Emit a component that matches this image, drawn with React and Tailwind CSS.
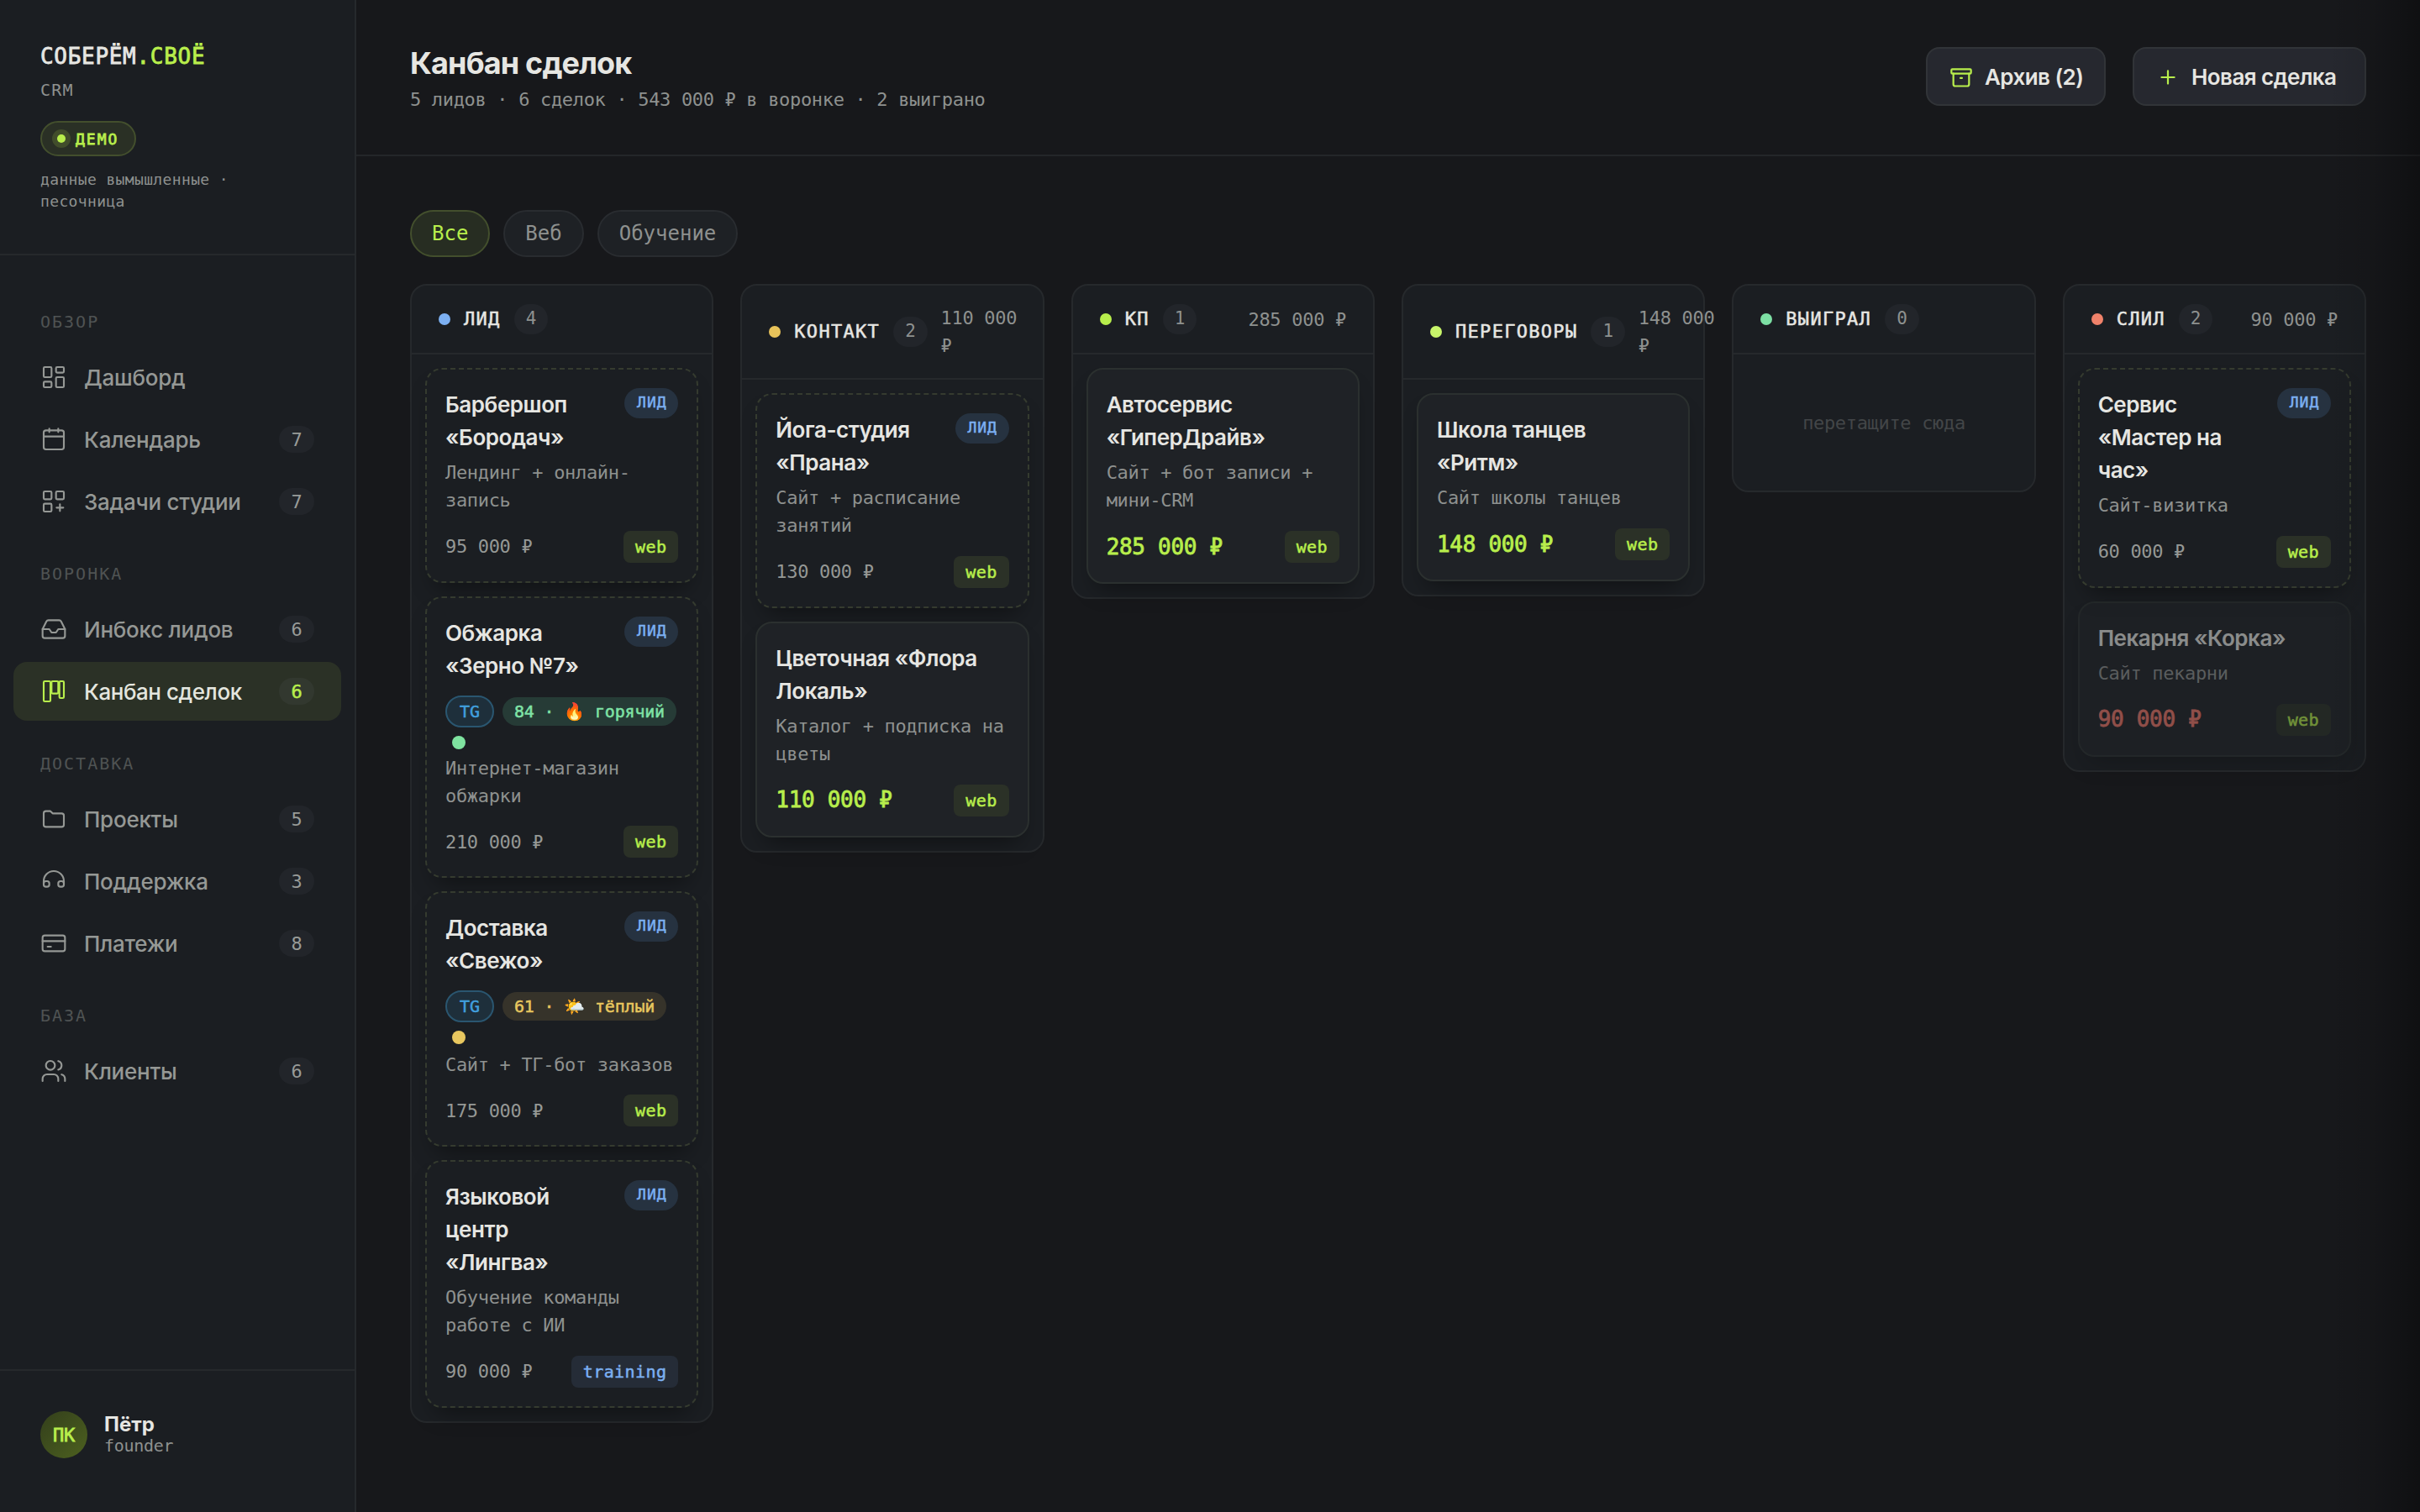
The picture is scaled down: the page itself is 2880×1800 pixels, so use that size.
import React from "react";
import { LayoutDashboard, Inbox, Users } from "lucide-react";

const MONO = "font-['DejaVu_Sans_Mono','Liberation_Mono',monospace]";
const SANS = "font-['Inter','Noto_Sans',sans-serif]";
// The monospaced family has no medium weight; a thin stroke stands in for it.
const MEDIUM = "[-webkit-text-stroke:0.5px_currentColor]";
const SEMIBOLD = "[-webkit-text-stroke:0.8px_currentColor]";

function Svg({ children, className = "size-8", strokeWidth = 1.6 }) {
  return (
    <svg
      viewBox="0 0 24 24"
      fill="none"
      stroke="currentColor"
      strokeWidth={strokeWidth}
      strokeLinecap="round"
      strokeLinejoin="round"
      className={`${className} shrink-0`}
    >
      {children}
    </svg>
  );
}

const icons = {
  dashboard: <LayoutDashboard className="size-8 shrink-0" strokeWidth={1.6} />,
  inbox: <Inbox className="size-8 shrink-0" strokeWidth={1.6} />,
  users: <Users className="size-8 shrink-0" strokeWidth={1.6} />,
  calendar: (
    <Svg>
      <rect x="3" y="4" width="18" height="17" rx="2" />
      <path d="M3 9.5h18M8 2.5v3M16 2.5v3" />
    </Svg>
  ),
  tasks: (
    <Svg>
      <rect x="3" y="3" width="7" height="7" rx="1" />
      <rect x="14" y="3" width="7" height="7" rx="1" />
      <rect x="3" y="14" width="7" height="7" rx="1" />
      <path d="M17.5 14.5v6M14.5 17.5h6" />
    </Svg>
  ),
  kanban: (
    <Svg>
      <rect x="3" y="3" width="6" height="18" rx="1" />
      <rect x="10" y="3" width="6" height="11" rx="1" />
      <rect x="17" y="3" width="4" height="15" rx="1" />
    </Svg>
  ),
  folder: (
    <Svg>
      <path d="M3 7a2 2 0 0 1 2-2h4l2 2h8a2 2 0 0 1 2 2v8a2 2 0 0 1-2 2H5a2 2 0 0 1-2-2z" />
    </Svg>
  ),
  support: (
    <Svg>
      <path d="M3 14v-2a9 9 0 0 1 18 0v2" />
      <path d="M3 14a2 2 0 0 1 2-2h1a2 2 0 0 1 2 2v1a2 2 0 0 1-2 2H5a2 2 0 0 1-2-2zM21 14a2 2 0 0 0-2-2h-1a2 2 0 0 0-2 2v1a2 2 0 0 0 2 2h1a2 2 0 0 0 2-2z" />
    </Svg>
  ),
  card: (
    <Svg>
      <rect x="2" y="5" width="20" height="14" rx="2" />
      <path d="M2 10h20M6.5 15h3" />
    </Svg>
  ),
};

const nav = [
  {
    label: "ОБЗОР",
    items: [
      { icon: "dashboard", text: "Дашборд" },
      { icon: "calendar", text: "Календарь", count: 7 },
      { icon: "tasks", text: "Задачи студии", count: 7 },
    ],
  },
  {
    label: "ВОРОНКА",
    items: [
      { icon: "inbox", text: "Инбокс лидов", count: 6 },
      { icon: "kanban", text: "Канбан сделок", count: 6, active: true },
    ],
  },
  {
    label: "ДОСТАВКА",
    items: [
      { icon: "folder", text: "Проекты", count: 5 },
      { icon: "support", text: "Поддержка", count: 3 },
      { icon: "card", text: "Платежи", count: 8 },
    ],
  },
  { label: "БАЗА", items: [{ icon: "users", text: "Клиенты", count: 6 }] },
];

const columns = [
  {
    title: "ЛИД",
    dot: "bg-[#7cb0f2]",
    count: 4,
    cards: [
      { title: "Барбершоп «Бородач»", desc: "Лендинг + онлайн-запись", price: "95\u00a0000 ₽", tag: "web", lead: true },
      {
        title: "Обжарка «Зерно №7»",
        desc: "Интернет-магазин обжарки",
        price: "210\u00a0000 ₽",
        tag: "web",
        lead: true,
        heat: { score: 84, emoji: "🔥", text: "горячий", pill: "bg-[#263b36] text-[#7fe3a6]", dot: "bg-[#7fe3a0]", box: "h-20" },
      },
      {
        title: "Доставка «Свежо»",
        desc: "Сайт + ТГ-бот заказов",
        price: "175\u00a0000 ₽",
        tag: "web",
        lead: true,
        heat: { score: 61, emoji: "🌤️", text: "тёплый", pill: "bg-[#36332a] text-[#e8c75f]", dot: "bg-[#e8c75f]", box: "h-[81.5px]" },
      },
      { title: "Языковой центр «Лингва»", desc: "Обучение команды работе с ИИ", price: "90\u00a0000 ₽", tag: "training", lead: true },
    ],
  },
  {
    title: "КОНТАКТ",
    dot: "bg-[#e8c35a]",
    count: 2,
    sum: "110\u00a0000 ₽",
    cards: [
      { title: "Йога-студия «Прана»", desc: "Сайт + расписание занятий", price: "130\u00a0000 ₽", tag: "web", lead: true },
      { title: "Цветочная «Флора Локаль»", desc: "Каталог + подписка на цветы", price: "110\u00a0000 ₽", tag: "web" },
    ],
  },
  {
    title: "КП",
    dot: "bg-[#b8ee4c]",
    count: 1,
    sum: "285\u00a0000 ₽",
    cards: [{ title: "Автосервис «ГиперДрайв»", desc: "Сайт + бот записи + мини-CRM", price: "285\u00a0000 ₽", tag: "web" }],
  },
  {
    title: "ПЕРЕГОВОРЫ",
    dot: "bg-[#c8f56a]",
    count: 1,
    sum: "148\u00a0000 ₽",
    cards: [{ title: "Школа танцев «Ритм»", desc: "Сайт школы танцев", price: "148\u00a0000 ₽", tag: "web" }],
  },
  { title: "ВЫИГРАЛ", dot: "bg-[#7de0a4]", count: 0, cards: [] },
  {
    title: "СЛИЛ",
    dot: "bg-[#f0826a]",
    count: 2,
    sum: "90\u00a0000 ₽",
    cards: [
      { title: "Сервис «Мастер на час»", desc: "Сайт-визитка", price: "60\u00a0000 ₽", tag: "web", lead: true },
      { title: "Пекарня «Корка»", desc: "Сайт пекарни", price: "90\u00a0000 ₽", tag: "web", lost: true },
    ],
  },
];

function NavItem({ item }) {
  return (
    <div
      className={`flex h-[70px] items-center gap-5 rounded-2xl px-8 ${
        item.active ? "bg-[#2b3126] text-[#b8ee4c]" : "text-[#959895]"
      }`}
    >
      {icons[item.icon]}
      <span
        className={`flex-1 whitespace-nowrap text-[26px] font-medium ${
          item.active ? "tracking-[-0.45px] text-[#e4e6df]" : "tracking-[-0.25px]"
        }`}
      >
        {item.text}
      </span>
      {item.count !== undefined && (
        <span
          className={`${MONO} flex h-8 w-[42px] items-center justify-center rounded-full text-[22px] ${
            item.active ? `${MEDIUM} bg-[#32382f] text-[#b8ee4c]` : "bg-[#22252a] text-[#989b98]"
          }`}
        >
          {item.count}
        </span>
      )}
    </div>
  );
}

function Sidebar() {
  return (
    <aside className="flex w-[424px] shrink-0 flex-col border-r-2 border-[#26292c] bg-[#1b1e22]">
      <div className={`${MONO} h-[304px] border-b-2 border-[#26292c] px-12 pt-12`}>
        <div className={`${SEMIBOLD} text-[26px] leading-[38px] tracking-[0.7px] text-[#e6e6e2]`}>
          СОБЕРЁМ<span className="text-[#b8ee4c]">.СВОЁ</span>
        </div>
        <div className="mt-1.5 text-[20px] leading-[30px] tracking-[1.2px] text-[#8e918f]">CRM</div>
        <div className="mt-[22px] flex h-[42px] w-[114px] items-center gap-3 rounded-full border-2 border-[#434f2d] bg-[#2a3025] pl-[18px]">
          <span className="size-2.5 rounded-full bg-[#b8ee4c] shadow-[0_0_0_6px_#414d2b]" />
          <span className={`${SEMIBOLD} text-[18px] tracking-[2px] text-[#b8ee4c]`}>ДЕМО</span>
        </div>
        <div className="mt-[15px] text-[18px] leading-[26px] tracking-[0.36px] text-[#8e918f]">
          данные вымышленные ·<br />
          песочница
        </div>
      </div>
      <nav className="flex-1 px-4 pt-7">
        {nav.map((group) => (
          <div key={group.label} className="pt-9">
            <div className={`${MONO} h-[30px] px-8 text-[20px] leading-[30px] tracking-[2px] text-[#4f5353]`}>
              {group.label}
            </div>
            <div className="mt-4 flex flex-col gap-1">
              {group.items.map((item) => (
                <NavItem key={item.text} item={item} />
              ))}
            </div>
          </div>
        ))}
      </nav>
      <div className="flex h-[170px] items-start gap-5 border-t-2 border-[#26292c] px-12 pt-12">
        <div
          className={`${MONO} ${SEMIBOLD} flex size-14 items-center justify-center rounded-full bg-linear-to-br from-[#333f1b] to-[#4d611f] text-[22px] tracking-[-0.3px] text-[#b8ee4c]`}
        >
          ПК
        </div>
        <div className="pt-px">
          <div className="text-[24px] leading-[29px] font-bold text-[#e6e6e2]">Пётр</div>
          <div className={`${MONO} text-[20px] leading-[22px] tracking-[-0.3px] text-[#8e918f]`}>founder</div>
        </div>
      </div>
    </aside>
  );
}

function HeatRow({ heat }) {
  return (
    <div className={`${MONO} ${MEDIUM} ${heat.box} flex flex-wrap content-start items-center gap-x-2.5 pt-4 text-[20px] whitespace-nowrap`}>
      <span className="flex h-[38px] w-[58px] items-center justify-center rounded-full border-2 border-[#2a5670] bg-[#1e2f3b] text-[#419fdd]">
        TG
      </span>
      <span className={`flex h-[34px] items-center rounded-full px-3.5 tracking-[-0.2px] ${heat.pill}`}>
        {heat.score} · {heat.emoji}
        <span className="ml-3 tracking-[-0.2px]">{heat.text}</span>
      </span>
      <span className="flex w-full pt-2.5 pl-2">
        <span className={`size-4 rounded-full ${heat.dot}`} />
      </span>
    </div>
  );
}

function Card({ card }) {
  const price = card.lead
    ? "text-[22px] leading-[33px] tracking-[-0.33px] text-[#959895]"
    : `${SEMIBOLD} text-[26px] leading-[39.6px] tracking-[-0.3px] ${card.lost ? "text-[#f0786a]" : "text-[#b8ee4c]"}`;
  return (
    <div
      className={`rounded-[20px] border-2 p-[22px] shadow-[0_16px_28px_-12px_rgba(0,0,0,0.45)] ${
        card.lead ? "border-dashed border-[#353b2f] bg-[#1b1e22]" : "border-[#2b302f] bg-[#1f2226]"
      } ${card.lost ? "opacity-55" : ""}`}
    >
      <div className="flex items-start justify-between gap-4">
        <div className="text-[26px] leading-[39px] font-semibold tracking-[-0.45px] text-[#e6e6e2]">{card.title}</div>
        {card.lead && (
          <span
            className={`${MONO} ${MEDIUM} flex h-9 w-16 shrink-0 items-center justify-center rounded-full bg-[#263240] pb-[3px] pl-px text-[18px] tracking-[1px] text-[#7cb0f2]`}
          >
            ЛИД
          </span>
        )}
      </div>
      {card.heat && <HeatRow heat={card.heat} />}
      <div className={`${MONO} mt-[6px] text-[22px] leading-[33px] tracking-[-0.33px] text-[#8e918f]`}>{card.desc}</div>
      <div className={`${MONO} mt-[19.5px] flex items-center justify-between whitespace-nowrap`}>
        <span className={price}>{card.price}</span>
        <span
          className={`${MEDIUM} flex h-[38px] items-center rounded-lg px-3.5 text-[20px] tracking-[0.4px] ${
            card.tag === "web" ? "bg-[#2b3127] text-[#b8ee4c]" : "bg-[#252c37] text-[#7cb0f2]"
          }`}
        >
          {card.tag}
        </span>
      </div>
    </div>
  );
}

function Column({ column }) {
  return (
    <section className="min-w-0 rounded-[20px] border-2 border-[#26292c] bg-[#1b1e22]">
      <header className={`${MONO} flex items-center gap-4 border-b-2 border-[#26292c] px-8 py-[22px]`}>
        <span className={`size-3.5 shrink-0 rounded-full ${column.dot}`} />
        <span className={`${MEDIUM} text-[22px] leading-9 tracking-[1.3px] text-[#e6e6e2]`}>{column.title}</span>
        <span className="flex h-9 shrink-0 items-center rounded-full bg-[#22252a] px-3.5 text-[21px] tracking-[-0.3px] text-[#8e918f]">
          {column.count}
        </span>
        {column.sum && (
          <span className="ml-auto text-[22px] leading-[33px] tracking-[-0.3px] text-[#8e918f]">{column.sum}</span>
        )}
      </header>
      <div className="flex flex-col gap-4 p-4">
        {column.cards.map((card) => (
          <Card key={card.title} card={card} />
        ))}
        {column.cards.length === 0 && (
          <div className={`${MONO} flex h-[130px] items-center justify-center text-[22px] tracking-[-0.33px] text-[#434648]`}>
            перетащите сюда
          </div>
        )}
      </div>
    </section>
  );
}

function HeaderButton({ icon, width, children }) {
  return (
    <button
      className={`${width} flex h-[70px] items-center gap-3.5 rounded-2xl border-2 border-[#313438] bg-[#26282f] pl-[26px] text-[26px] font-semibold tracking-[-0.56px] whitespace-nowrap text-[#e6e6e2]`}
    >
      {icon}
      {children}
    </button>
  );
}

export default function App() {
  return (
    <div className={`${SANS} relative flex h-screen w-full overflow-hidden bg-[#17181b] text-[#e6e6e2]`}>
      <Sidebar />
      <main className="min-w-0 flex-1">
        <header className="flex h-[186px] items-start justify-between border-b-2 border-[#242629] px-16 pt-[53px]">
          <div>
            <h1 className="text-[36px] leading-[44px] font-bold tracking-[-0.85px]">Канбан сделок</h1>
            <p className={`${MONO} mt-[5px] text-[22px] leading-[33px] tracking-[-0.33px] text-[#8e918f]`}>
              5 лидов · 6 сделок · 543 000 ₽ в воронке · 2 выиграно
            </p>
          </div>
          <div className="mt-[3px] flex gap-8">
            <HeaderButton
              width="w-[214px]"
              icon={
                <Svg className="mt-0.5 size-7 text-[#b8ee4c]" strokeWidth={1.9}>
                  <rect x="2" y="3.75" width="20" height="4.5" rx="1" />
                  <path d="M4 8.25V19a2 2 0 0 0 2 2h12a2 2 0 0 0 2-2V8.25M11.2 12.75h1.6" />
                </Svg>
              }
            >
              Архив (2)
            </HeaderButton>
            <HeaderButton
              width="w-[278px]"
              icon={
                <Svg className="mt-0.5 size-7 text-[#b8ee4c]" strokeWidth={1.9}>
                  <path d="M12 5.5v13M5.5 12h13" />
                </Svg>
              }
            >
              Новая сделка
            </HeaderButton>
          </div>
        </header>
        <div className="px-16 pt-16">
          <div className={`${MONO} flex gap-4 text-[24px]`}>
            <button className="h-14 rounded-full border-2 border-[#434f2d] bg-[#272d22] px-6 text-[#b8ee4c]">Все</button>
            <button className="h-14 rounded-full border-2 border-[#292c30] bg-[#1e2125] px-6 text-[#8e918f]">Веб</button>
            <button className="h-14 rounded-full border-2 border-[#292c30] bg-[#1e2125] px-6 text-[#8e918f]">Обучение</button>
          </div>
          <div className="mt-8 grid grid-cols-6 items-start gap-8">
            {columns.map((column) => (
              <Column key={column.title} column={column} />
            ))}
          </div>
        </div>
      </main>
      <div className="pointer-events-none absolute inset-y-0 right-0 w-[110px] bg-linear-to-r from-transparent via-black/10 to-black/35" />
    </div>
  );
}
